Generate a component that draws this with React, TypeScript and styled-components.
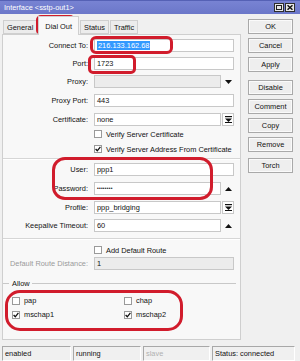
import React from "react";
import styled, { createGlobalStyle } from "styled-components";

const Global = createGlobalStyle`
  html, body { margin: 0; padding: 0; background: #f0f0f0; }
  body { font-family: "Liberation Sans", Arial, sans-serif; font-size: 7.4px; color: #111; }
  * { box-sizing: border-box; }
`;

const Window = styled.div`
  position: relative;
  width: 300px;
  height: 361px;
  overflow: hidden;
  background: #f0f0f0;
  display: flex;
  flex-direction: column;
`;

const TitleBar = styled.div`
  height: 14px;
  flex: none;
  background: linear-gradient(#7883d3, #6b77c9);
  border-top: 1px solid #5561b5;
  display: flex;
  align-items: center;
  padding: 0 5px 0 4px;
  color: #fff;
`;

const Title = styled.span`
  flex: 1;
  white-space: nowrap;
`;

const Controls = styled.div`
  display: flex;
  gap: 1px;
`;

const CtlBtn = styled.div`
  width: 10px;
  height: 9px;
  background: #e6e6e6;
  border: 1px solid #2e2e2e;
  display: flex;
  align-items: center;
  justify-content: center;
`;

const Body = styled.div`
  flex: 1;
  display: flex;
  min-height: 0;
`;

const Left = styled.div`
  width: 241px;
  display: flex;
  flex-direction: column;
  padding: 3px 0 6px 2px;
`;

const Tabs = styled.div`
  display: flex;
  align-items: flex-end;
  height: 17px;
  padding-left: 1px;
  gap: 1px;
`;

const Tab = styled.div<{ $active?: boolean }>`
  height: ${(p) => (p.$active ? 19 : 14)}px;
  padding: 0 ${(p) => (p.$active ? 6 : 3)}px;
  display: flex;
  align-items: center;
  border: 1px solid #cfcfcf;
  border-bottom: ${(p) => (p.$active ? "none" : "1px solid #cfcfcf")};
  background: ${(p) => (p.$active ? "#f8f8f8" : "#ececec")};
  margin-bottom: ${(p) => (p.$active ? -1 : 0)}px;
  position: relative;
  z-index: ${(p) => (p.$active ? 1 : 0)};
  white-space: nowrap;
`;

const Panel = styled.div`
  flex: 1;
  border: 1px solid #cfcfcf;
  background: #f8f8f8;
  padding-top: 4px;
  display: flex;
  flex-direction: column;
`;

const Row = styled.div<{ $mt: number; $h?: number }>`
  display: grid;
  grid-template-columns: 85px 140px;
  column-gap: 6px;
  height: ${(p) => p.$h ?? 13}px;
  align-items: center;
  margin-top: ${(p) => p.$mt}px;
`;

const Label = styled.div<{ $disabled?: boolean }>`
  text-align: right;
  white-space: nowrap;
  color: ${(p) => (p.$disabled ? "#9a9a9a" : "#111")};
`;

const FieldWrap = styled.div`
  display: flex;
  height: 13px;
`;

const Field = styled.div<{ $disabled?: boolean }>`
  flex: 1;
  height: 13px;
  border: 1px solid #c8c8c8;
  background: ${(p) => (p.$disabled ? "#ececec" : "#fff")};
  padding-left: 2px;
  display: flex;
  align-items: center;
  white-space: nowrap;
  overflow: hidden;
`;

const Selected = styled.span`
  background: #3399ff;
  color: #fff;
  padding: 0 1px;
  line-height: 9px;
`;

const Dots = styled.span`
  font-size: 5px;
  letter-spacing: 0.2px;
  line-height: 1;
`;

const Arrow = styled.div`
  width: 13px;
  display: flex;
  align-items: center;
  justify-content: center;
  padding-left: 2px;
`;

const SideBox = styled.div`
  width: 12px;
  margin-left: 1px;
  height: 13px;
  border: 1px solid #c8c8c8;
  background: #fff;
  display: flex;
  align-items: center;
  justify-content: center;
`;

const CheckLine = styled.div`
  display: flex;
  align-items: center;
  gap: 4px;
  white-space: nowrap;
`;

const Box = styled.div`
  width: 8px;
  height: 8px;
  border: 1px solid #9a9a9a;
  background: #fff;
  display: flex;
  align-items: center;
  justify-content: center;
  flex: none;
`;

const Separator = styled.div<{ $mt: number }>`
  height: 2px;
  border-top: 1px solid #d6d6d6;
  border-bottom: 1px solid #ffffff;
  margin-top: ${(p) => p.$mt}px;
`;

const GroupHeader = styled.div<{ $mt: number }>`
  display: flex;
  align-items: center;
  height: 9px;
  margin-top: ${(p) => p.$mt}px;
  margin-right: 4px;
  &::before {
    content: "";
    width: 6px;
    border-top: 1px solid #c8c8c8;
  }
  &::after {
    content: "";
    flex: 1;
    border-top: 1px solid #c8c8c8;
  }
`;

const GroupTitle = styled.span`
  padding: 0 2px 0 3px;
`;

const AllowGrid = styled.div`
  display: grid;
  grid-template-columns: 112px 112px;
  row-gap: 5px;
  padding-left: 9px;
  margin-top: 8px;
`;

const ButtonCol = styled.div`
  width: 45px;
  margin: 5px 0 0 7px;
  display: flex;
  flex-direction: column;
`;

const Button = styled.div<{ $mt: number }>`
  height: 15px;
  margin-top: ${(p) => p.$mt}px;
  border: 1px solid #a9a9a9;
  background: #eeeeee;
  box-shadow: inset 0 0 0 1px #fafafa;
  display: flex;
  align-items: center;
  justify-content: center;
`;

const StatusBar = styled.div`
  height: 15px;
  flex: none;
  display: flex;
  gap: 2px;
  padding: 0 5px 0 2px;
`;

const Cell = styled.div<{ $w: number; $disabled?: boolean }>`
  width: ${(p) => p.$w}px;
  border-top: 1px solid #a8a8a8;
  border-left: 1px solid #a8a8a8;
  border-right: 1px solid #fff;
  border-bottom: 1px solid #fff;
  padding-left: 2px;
  display: flex;
  align-items: center;
  white-space: nowrap;
  color: ${(p) => (p.$disabled ? "#b0b0b0" : "#111")};
`;

const Annot = styled.div<{ $x: number; $y: number; $w: number; $h: number; $r: number }>`
  position: absolute;
  left: ${(p) => p.$x}px;
  top: ${(p) => p.$y}px;
  width: ${(p) => p.$w}px;
  height: ${(p) => p.$h}px;
  border: 3px solid #d11c2c;
  border-radius: ${(p) => p.$r}px;
  pointer-events: none;
`;

const Down = () => (
  <svg width="7" height="4" viewBox="0 0 7 4">
    <polygon points="0,0 7,0 3.5,4" fill="#111" />
  </svg>
);
const Up = () => (
  <svg width="7" height="4" viewBox="0 0 7 4">
    <polygon points="0,4 7,4 3.5,0" fill="#111" />
  </svg>
);
const Expand = () => (
  <svg width="7" height="7" viewBox="0 0 7 7">
    <rect x="0" y="0" width="7" height="1.2" fill="#111" />
    <polygon points="0,2.5 7,2.5 3.5,6" fill="#111" />
    <rect x="0" y="6" width="7" height="1" fill="#111" />
  </svg>
);
const Check = () => (
  <svg width="6" height="6" viewBox="0 0 6 6">
    <polyline points="0.6,3 2.3,4.8 5.4,0.8" fill="none" stroke="#111" strokeWidth="1.3" />
  </svg>
);

const CheckBox = ({ checked, label }: { checked?: boolean; label: string }) => (
  <CheckLine>
    <Box>{checked && <Check />}</Box>
    <span>{label}</span>
  </CheckLine>
);

export default function App() {
  return (
    <Window>
      <Global />
      <TitleBar>
        <Title>Interface &lt;sstp-out1&gt;</Title>
        <Controls>
          <CtlBtn>
            <svg width="6" height="5" viewBox="0 0 6 5">
              <rect x="0.5" y="0.5" width="5" height="4" fill="none" stroke="#222" />
            </svg>
          </CtlBtn>
          <CtlBtn>
            <svg width="6" height="5" viewBox="0 0 6 5">
              <path d="M0.5 0.3 L5.5 4.7 M5.5 0.3 L0.5 4.7" stroke="#111" strokeWidth="1.5" />
            </svg>
          </CtlBtn>
        </Controls>
      </TitleBar>
      <Body>
        <Left>
          <Tabs>
            <Tab>General</Tab>
            <Tab $active>Dial Out</Tab>
            <Tab>Status</Tab>
            <Tab>Traffic</Tab>
          </Tabs>
          <Panel>
            <Row $mt={0}>
              <Label>Connect To:</Label>
              <Field>
                <Selected>216.133.162.68</Selected>
              </Field>
            </Row>
            <Row $mt={5}>
              <Label>Port:</Label>
              <Field>1723</Field>
            </Row>
            <Row $mt={5}>
              <Label>Proxy:</Label>
              <FieldWrap>
                <Field $disabled />
                <Arrow>
                  <Down />
                </Arrow>
              </FieldWrap>
            </Row>
            <Row $mt={6}>
              <Label>Proxy Port:</Label>
              <Field>443</Field>
            </Row>
            <Row $mt={6}>
              <Label>Certificate:</Label>
              <FieldWrap>
                <Field>none</Field>
                <SideBox>
                  <Expand />
                </SideBox>
              </FieldWrap>
            </Row>
            <Row $mt={2} $h={12}>
              <span />
              <CheckBox label="Verify Server Certificate" />
            </Row>
            <Row $mt={3} $h={12}>
              <span />
              <CheckBox checked label="Verify Server Address From Certificate" />
            </Row>
            <Separator $mt={3} />
            <Row $mt={3}>
              <Label>User:</Label>
              <Field>ppp1</Field>
            </Row>
            <Row $mt={6}>
              <Label>Password:</Label>
              <FieldWrap>
                <Field>
                  <Dots>••••••••</Dots>
                </Field>
                <Arrow>
                  <Up />
                </Arrow>
              </FieldWrap>
            </Row>
            <Row $mt={6}>
              <Label>Profile:</Label>
              <FieldWrap>
                <Field>ppp_bridging</Field>
                <SideBox>
                  <Expand />
                </SideBox>
              </FieldWrap>
            </Row>
            <Row $mt={5}>
              <Label>Keepalive Timeout:</Label>
              <FieldWrap>
                <Field>60</Field>
                <Arrow>
                  <Up />
                </Arrow>
              </FieldWrap>
            </Row>
            <Separator $mt={6} />
            <Row $mt={4} $h={12}>
              <span />
              <CheckBox label="Add Default Route" />
            </Row>
            <Row $mt={1}>
              <Label $disabled>Default Route Distance:</Label>
              <Field $disabled>1</Field>
            </Row>
            <GroupHeader $mt={9}>
              <GroupTitle>Allow</GroupTitle>
            </GroupHeader>
            <AllowGrid>
              <CheckBox label="pap" />
              <CheckBox label="chap" />
              <CheckBox checked label="mschap1" />
              <CheckBox checked label="mschap2" />
            </AllowGrid>
          </Panel>
        </Left>
        <ButtonCol>
          <Button $mt={0}>OK</Button>
          <Button $mt={4}>Cancel</Button>
          <Button $mt={4}>Apply</Button>
          <Button $mt={8}>Disable</Button>
          <Button $mt={4}>Comment</Button>
          <Button $mt={4}>Copy</Button>
          <Button $mt={4}>Remove</Button>
          <Button $mt={6}>Torch</Button>
        </ButtonCol>
      </Body>
      <StatusBar>
        <Cell $w={69}>enabled</Cell>
        <Cell $w={68}>running</Cell>
        <Cell $w={67} $disabled>slave</Cell>
        <Cell $w={83}>Status: connected</Cell>
      </StatusBar>
      <Annot $x={36} $y={15} $w={39} $h={20} $r={5} />
      <Annot $x={90} $y={36} $w={83} $h={18} $r={6} />
      <Annot $x={88} $y={55} $w={48} $h={19} $r={5} />
      <Annot $x={52} $y={157} $w={161} $h={43} $r={13} />
      <Annot $x={5} $y={290} $w={178} $h={41} $r={15} />
    </Window>
  );
}
